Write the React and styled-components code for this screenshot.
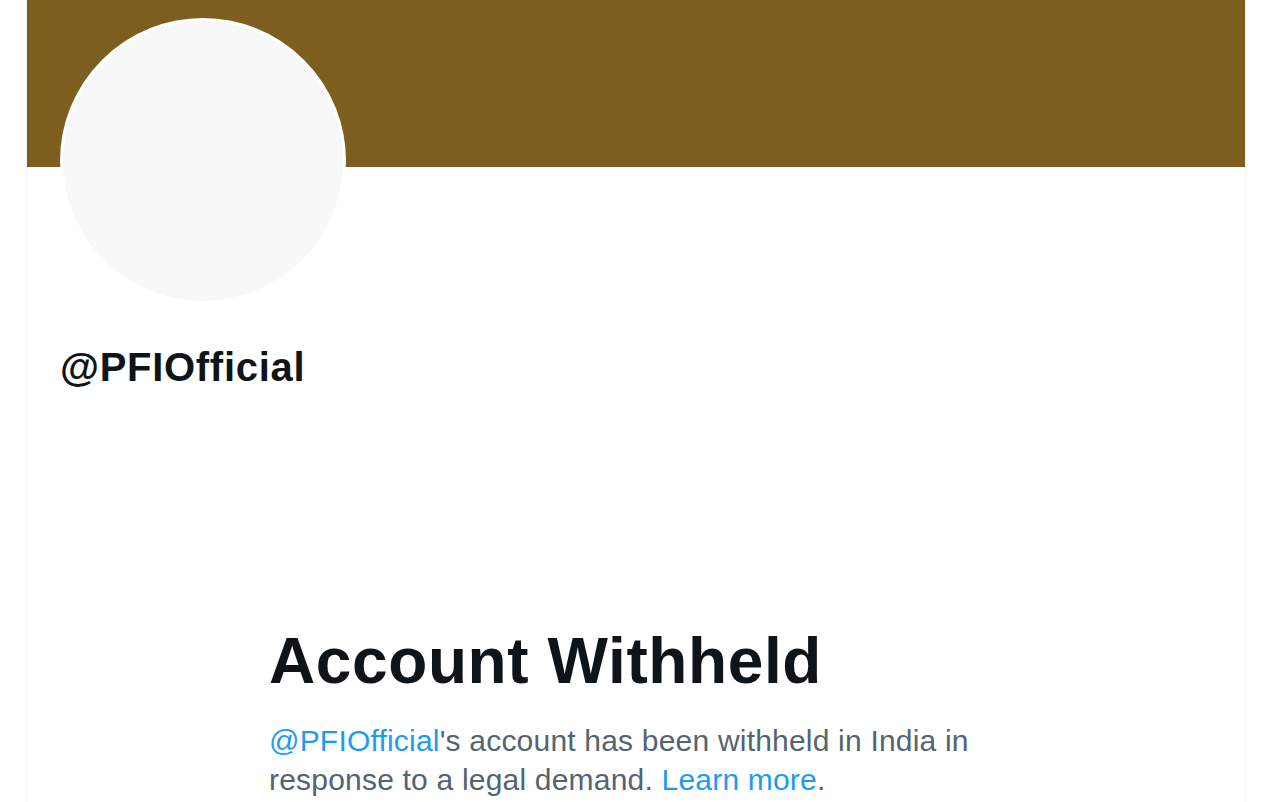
import React from "react";
import styled, { createGlobalStyle } from "styled-components";

const GlobalStyle = createGlobalStyle`
  html, body {
    margin: 0;
    padding: 0;
    background: #ffffff;
    font-family: "Liberation Sans", Arial, sans-serif;
  }
`;

const Page = styled.div`
  width: 1280px;
  height: 802px;
  overflow: hidden;
  padding-left: 26px;
  box-sizing: border-box;
  background: #ffffff;
`;

const Column = styled.main`
  width: 1220px;
  height: 100%;
  box-sizing: border-box;
  border-left: 1px solid #f1f3f4;
  border-right: 1px solid #f1f3f4;
`;

const Banner = styled.div`
  height: 167px;
  background: #7e5e1f;
`;

const ProfileHead = styled.section`
  padding-left: 33px;
`;

const Avatar = styled.div`
  width: 286px;
  height: 286px;
  margin-top: -149px;
  border-radius: 50%;
  box-sizing: border-box;
  border: 3px solid #ffffff;
  background: #f7f9f9;
`;

const Handle = styled.h2`
  margin: 39px 0 0;
  font-size: 40px;
  line-height: 48px;
  font-weight: 700;
  color: #0f1419;
  letter-spacing: 0.7px;
`;

const Notice = styled.section`
  padding-left: 242px;
  margin-top: 232px;
  width: 740px;
`;

const Title = styled.h1`
  margin: 0;
  font-size: 64px;
  line-height: 77px;
  font-weight: 800;
  color: #0f1419;
  letter-spacing: 0.6px;
`;

const Body = styled.p`
  margin: 21px 0 0;
  font-size: 30px;
  line-height: 39px;
  letter-spacing: 0.2px;
  color: #536471;
`;

const Link = styled.a`
  color: #1d9bf0;
  text-decoration: none;
`;

export default function App() {
  return (
    <>
      <GlobalStyle />
      <Page>
        <Column>
          <Banner />
          <ProfileHead>
            <Avatar />
            <Handle>@PFIOfficial</Handle>
          </ProfileHead>
          <Notice>
            <Title>Account Withheld</Title>
            <Body>
              <Link>@PFIOfficial</Link>'s account has been withheld in India in
              response to a legal demand. <Link>Learn more</Link>.
            </Body>
          </Notice>
        </Column>
      </Page>
    </>
  );
}
